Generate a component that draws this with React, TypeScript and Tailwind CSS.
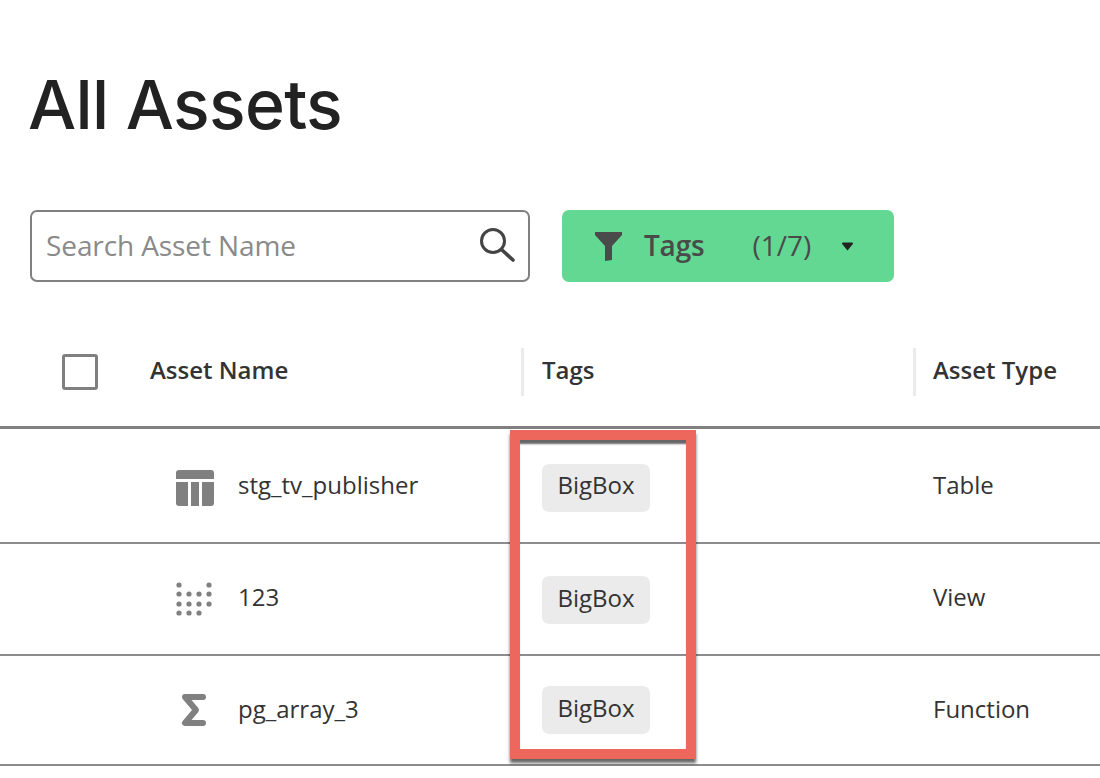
const rows = [
  { name: 'stg_tv_publisher', type: 'Table', icon: 'table', height: 'h-[115px]', textGap: 'mb-[2px]', badgeGap: 'mt-[4px]' },
  { name: '123', type: 'View', icon: 'view', height: 'h-[112px]', textGap: 'mb-[4px]', badgeGap: 'mt-[2px]' },
  { name: 'pg_array_3', type: 'Function', icon: 'fn', height: 'h-[110px]', textGap: 'mb-[2px]', badgeGap: 'mt-0' },
];

// dot grid of the view icon: x, y
const viewDots = [
  [4, 5], [34, 5],
  [4, 14], [14, 14], [24, 14], [34, 14],
  [4, 24], [14, 24], [24, 24], [34, 24],
  [4, 33], [14, 33], [24, 33],
];

const RowIcon = ({ kind }: { kind: string }) => {
  if (kind === 'table') {
    return (
      <svg className="mt-[4px]" width="40" height="38" viewBox="0 0 40 38" fill="#808080">
        <path d="M1 4a3 3 0 0 1 3-3h32a3 3 0 0 1 3 3v6H1z" />
        <path d="M1 13h12v24H4a3 3 0 0 1-3-3z" />
        <rect x="16" y="13" width="8" height="24" />
        <path d="M27 13h12v21a3 3 0 0 1-3 3h-9z" />
      </svg>
    );
  }
  if (kind === 'view') {
    return (
      <svg width="40" height="38" viewBox="0 0 40 38" fill="#808080">
        {viewDots.map(([cx, cy], i) => (
          <circle key={i} cx={cx} cy={cy} r="2.6" />
        ))}
      </svg>
    );
  }
  return (
    <svg width="40" height="38" viewBox="0 0 40 38" fill="none" stroke="#808080" strokeWidth="6" strokeLinejoin="round" strokeLinecap="round">
      <path d="M28 6H10L21 19L10 32H28" />
    </svg>
  );
};

const App = () => {
  return (
    <div className="relative h-[778px] w-[1100px] overflow-hidden bg-white font-['Open_Sans',sans-serif] text-[#333333]">
      <h1 className="pl-[28px] pt-[65px] font-['Inter',sans-serif] text-[68px] leading-[78px] font-medium tracking-[-0.7px] text-[#222222]">
        All Assets
      </h1>

      <div className="mt-[67px] flex gap-[32px] pl-[30px]">
        <div className="flex h-[72px] w-[500px] items-center justify-between rounded-[7px] border-2 border-[#808080] pl-[14px] pr-[12px]">
          <span className="pb-[3px] text-[28px] tracking-[-0.1px] text-[#8a8a8a]">Search Asset Name</span>
          <svg width="38" height="38" viewBox="0 0 38 38" fill="none" stroke="#444444" strokeLinecap="round">
            <circle cx="15" cy="14" r="11.5" strokeWidth="3" />
            <path d="M24 23l11 10" strokeWidth="3.6" />
          </svg>
        </div>
        <div className="flex h-[72px] w-[332px] items-center rounded-[7px] bg-[#62d892] pl-[33px] text-[28px] text-[#4a4a4a]">
          <svg width="27" height="29" viewBox="0 0 27 29" fill="#4a4a4a">
            <path d="M0 0h27v3L17 14v14l-7 1V14L0 3z" />
          </svg>
          <span className="ml-[22px] pb-[3px] font-semibold tracking-[-0.2px]">Tags</span>
          <span className="ml-[48px] pb-[3px]">(1/7)</span>
          <svg className="ml-[31px]" width="11" height="9" viewBox="0 0 11 9" fill="#222222">
            <path d="M1 0.5h9a1 1 0 0 1 .8 1.6L5.5 8.5 .2 2.1A1 1 0 0 1 1 .5z" />
          </svg>
        </div>
      </div>

      <div className="mt-[66px] grid h-[48px] grid-cols-[521px_392px_1fr] items-stretch text-[24px] font-semibold">
        <div className="flex items-center pl-[62px]">
          <div className="h-[36px] w-[36px] rounded-[3px] border-[3px] border-[#808080]" />
          <span className="ml-[52px] pb-[4px]">Asset Name</span>
        </div>
        <div className="flex items-center border-l-[3px] border-[#ebebeb] pb-[4px] pl-[18px]">Tags</div>
        <div className="flex items-center border-l-[3px] border-[#ebebeb] pb-[4px] pl-[17px]">Asset Type</div>
      </div>

      <div className="mt-[30px] border-t-[3px] border-[#808080]">
        {rows.map((row) => (
          <div
            key={row.name}
            className={`grid grid-cols-[521px_392px_1fr] items-center border-b-2 border-[#8c8c8c] text-[24px] ${row.height}`}
          >
            <div className="flex items-center pl-[175px]">
              <RowIcon kind={row.icon} />
              <span className={`ml-[23px] ${row.textGap}`}>{row.name}</span>
            </div>
            <div className="pl-[21px]">
              <span className={`inline-flex h-[48px] w-[108px] items-center justify-center rounded-[7px] bg-[#ebebeb] pb-[5px] ${row.badgeGap}`}>
                BigBox
              </span>
            </div>
            <div className={`pl-[20px] ${row.textGap}`}>{row.type}</div>
          </div>
        ))}
      </div>

      {/* red highlight drawn on top of the tags column */}
      <div className="absolute left-[510px] top-[430px] h-[329px] w-[186px] border-[10px] border-[#ee675c] shadow-[0_4px_3px_rgba(0,0,0,0.6),inset_0_5px_2px_-1px_rgba(0,0,0,0.6)]" />
    </div>
  );
};

export default App;
